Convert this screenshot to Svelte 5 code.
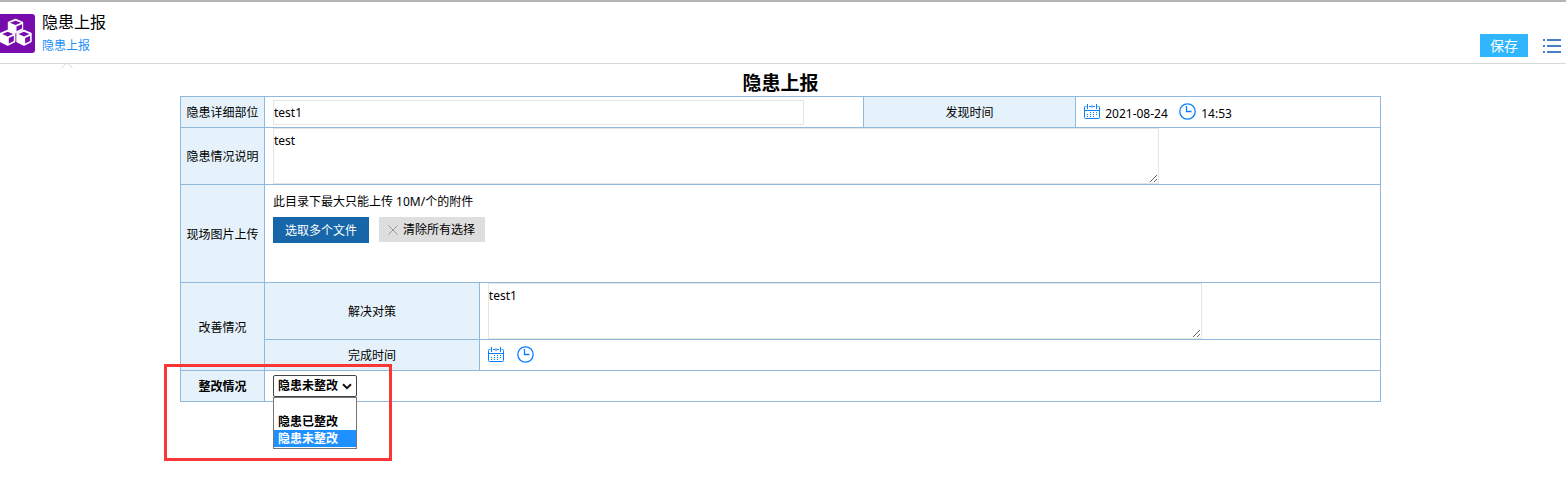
<script lang="ts">
  let place = $state('test1');
  let description = $state('test');
  let measure = $state('test1');
  let status = $state('隐患未整改');

  const statuses = ['', '隐患已整改', '隐患未整改'];
</script>

{#snippet calendar()}
  <svg width="16" height="15" viewBox="0 0 16 15" fill="none" stroke="#0a80ff" aria-hidden="true">
    <path d="M2.5 2.5H1.5Q.5 2.5 .5 3.5V13.5Q.5 14.5 1.5 14.5H14.5Q15.5 14.5 15.5 13.5V3.5Q15.5 2.5 14.5 2.5H13.5M5 2.5H7M9 2.5H11M3.5 0V5M8 1V4M12.5 0V5M1 6.5H15" />
    <path d="M6 8.5H14M3 10.5H14M3 12.5H11" stroke-dasharray="1 2" />
  </svg>
{/snippet}

{#snippet clock()}
  <svg width="17" height="17" viewBox="0 0 17 17" fill="none" stroke="#0a80ff" aria-hidden="true">
    <circle cx="8.5" cy="8.5" r="7.7" stroke-width="1.3" />
    <path d="M7.5 3V8.5H12.5" stroke-width="1.3" />
  </svg>
{/snippet}

<header class="top">
  <svg class="logo" width="35" height="39" viewBox="0 0 35 39" aria-hidden="true">
    <path d="M0 0H32Q35 0 35 3V36Q35 39 32 39H0Z" fill="#780bac" />
    <g fill="#fff" stroke="#fff" stroke-width="1.4" stroke-linejoin="round">
      <path d="M8.5 8.5 15.5 5.5 22.5 8.5V15.5L15.5 18.5 8.5 15.5Z" />
      <path d="M.7 19.5 7.7 16.5 14.7 19.5V27.5L7.7 31 .7 27.5Z" />
      <path d="M17 19.5 24 16.5 31 19.5V27.5L24 31 17 27.5Z" />
    </g>
    <g fill="#780bac">
      <path d="M10 8.8 15.5 6.7 21 8.8 15.5 11.1Z" />
      <path d="M16.5 12.6 22 10.3V14.6L16.5 17.2Z" />
      <path d="M2.2 20 7.7 17.8 13.2 20 7.7 22.5Z" />
      <path d="M8.8 24 13.8 21.7V26.9L8.8 29.4Z" />
      <path d="M18.5 20 24 17.8 29.5 20 24 22.5Z" />
      <path d="M25.1 24 30.1 21.7V26.9L25.1 29.4Z" />
    </g>
  </svg>
  <div class="names">
    <div class="name">隐患上报</div>
    <a class="tab" href="#report">隐患上报
      <svg class="caret" width="12" height="7" viewBox="0 0 12 7" aria-hidden="true">
        <path d="M.5 6 6 .8 11.5 6" fill="#fff" stroke="#d4d4d4" />
      </svg>
    </a>
  </div>
  <div class="actions">
    <button type="button" class="save">保存</button>
    <button type="button" class="menu" aria-label="菜单">
      <svg width="18" height="14" viewBox="0 0 18 14" fill="#4b7fc4" aria-hidden="true">
        <path d="M0 0H2V2H0ZM4 0H18V2H4ZM0 6H2V8H0ZM4 6H18V8H4ZM0 12H2V14H0ZM4 12H18V14H4Z" />
      </svg>
    </button>
  </div>
</header>

<main id="report">
  <h1>隐患上报</h1>
  <table>
    <colgroup>
      <col class="c-label" />
      <col class="c-sub" />
      <col class="c-main" />
      <col class="c-time" />
      <col />
    </colgroup>
    <tbody>
      <tr class="line">
        <th><label for="place">隐患详细部位</label></th>
        <td colspan="2"><input id="place" type="text" bind:value={place} /></td>
        <th>发现时间</th>
        <td>
          <div class="when">
            <button type="button" aria-label="选择日期">{@render calendar()}</button>
            <span class="date">2021-08-24</span>
            <button type="button" aria-label="选择时间">{@render clock()}</button>
            <span>14:53</span>
          </div>
        </td>
      </tr>
      <tr class="area">
        <th><label for="description">隐患情况说明</label></th>
        <td colspan="4"><textarea id="description" bind:value={description}></textarea></td>
      </tr>
      <tr class="files">
        <th>现场图片上传</th>
        <td colspan="4">
          <div class="hint">此目录下最大只能上传 10M/个的附件</div>
          <div class="upload">
            <button type="button" class="pick">选取多个文件</button>
            <button type="button" class="clear">
              <svg width="10" height="10" viewBox="0 0 10 10" stroke="#999" aria-hidden="true">
                <path d="M.5 .5 9.5 9.5M9.5 .5 .5 9.5" />
              </svg>
              清除所有选择
            </button>
          </div>
        </td>
      </tr>
      <tr class="area">
        <th rowspan="2">改善情况</th>
        <th><label for="measure">解决对策</label></th>
        <td colspan="3"><textarea id="measure" bind:value={measure}></textarea></td>
      </tr>
      <tr class="line">
        <th>完成时间</th>
        <td colspan="3">
          <div class="when empty">
            <button type="button" aria-label="选择日期">{@render calendar()}</button>
            <button type="button" aria-label="选择时间">{@render clock()}</button>
          </div>
        </td>
      </tr>
      <tr class="line">
        <th class="strong">
          <label for="status">整改情况</label>
          <div class="mark"></div>
        </th>
        <td colspan="4">
          <div class="status">
            <select id="status" bind:value={status}>
              {#each statuses as item}
                <option value={item}>{item}</option>
              {/each}
            </select>
            <svg class="arrow" width="10" height="7" viewBox="0 0 10 7" aria-hidden="true">
              <path d="M1 1.2 5 5.2 9 1.2" fill="none" stroke="#111" stroke-width="2" />
            </svg>
            <ul role="listbox" aria-label="整改情况">
              {#each statuses as item}
                <li role="option" aria-selected={item === status} class:on={item === status}>{item}</li>
              {/each}
            </ul>
          </div>
        </td>
      </tr>
    </tbody>
  </table>
</main>

<style>
  :global(body) {
    margin: 0;
    background: #fff;
    color: #000;
    font: 12px/16px 'Noto Sans', 'Noto Sans CJK SC', sans-serif;
  }
  button,
  input,
  textarea,
  select {
    box-sizing: border-box;
    margin: 0;
    font: inherit;
    color: inherit;
  }
  button {
    border: 0;
    padding: 0;
    background: transparent;
    cursor: pointer;
  }
  svg {
    display: block;
  }

  .top {
    display: flex;
    box-sizing: border-box;
    height: 64px;
    padding-top: 10px;
    border-top: 2px solid #b4b4b4;
    border-bottom: 1px solid #d8d8d8;
  }
  .logo {
    margin-top: 2px;
  }
  .names {
    margin-left: 7px;
  }
  .name {
    font-size: 16px;
    line-height: 20px;
  }
  .tab {
    position: relative;
    display: block;
    margin-top: 6px;
    color: #1e8ffa;
    text-decoration: none;
  }
  .caret {
    position: absolute;
    left: 19px;
    top: 24px;
  }
  .actions {
    display: flex;
    align-items: center;
    align-self: flex-end;
    gap: 15px;
    margin: 0 5px 6px auto;
  }
  .save {
    width: 48px;
    height: 23px;
    background: #30b5ff;
    color: #fff;
    font-size: 14px;
    line-height: 23px;
  }

  main {
    padding: 6px 185px 97px 180px;
  }
  h1 {
    margin: 0;
    text-align: center;
    font-size: 19px;
    line-height: 26px;
  }
  table {
    width: 100%;
    table-layout: fixed;
    border-collapse: collapse;
  }
  .c-label {
    width: 7%;
  }
  .c-sub {
    width: 17.9%;
  }
  .c-main {
    width: 32%;
  }
  .c-time {
    width: 17.7%;
  }
  th,
  td {
    box-sizing: border-box;
    border: 1px solid #90b9dd;
    padding: 0;
  }
  th {
    padding-top: 2px;
    background: #e6f2fb;
    font-weight: normal;
    white-space: nowrap;
  }
  td {
    padding-left: 8px;
  }
  .line {
    height: 31px;
  }
  .area {
    height: 57px;
  }
  .files {
    height: 98px;
  }
  .files td {
    vertical-align: top;
    padding-top: 9px;
  }
  input,
  textarea {
    display: block;
    border: 1px solid #e6e6e1;
    background: #fff;
    outline: 0;
  }
  input {
    width: 90%;
    height: 25px;
    padding: 0;
  }
  textarea {
    width: 80%;
    height: 56px;
    padding: 4px 0;
    resize: both;
  }

  .when {
    display: flex;
    align-items: center;
    gap: 5px;
    padding-bottom: 2px;
  }
  .when span {
    padding-top: 6px;
  }
  .date {
    min-width: 69px;
  }
  .when.empty {
    gap: 13px;
  }

  .upload {
    display: flex;
    align-items: flex-start;
    gap: 10px;
    margin-top: 7px;
  }
  .pick {
    width: 96px;
    height: 26px;
    padding-top: 1px;
    background: #1766a9;
    color: #fff;
  }
  .clear {
    display: flex;
    align-items: center;
    gap: 5px;
    height: 25px;
    padding: 0 10px 0 9px;
    background: #dedede;
  }

  .strong {
    position: relative;
    font-weight: bold;
  }
  .mark {
    position: absolute;
    z-index: 2;
    left: -17px;
    top: -7px;
    box-sizing: border-box;
    width: 228px;
    height: 97px;
    border: 3px solid #fa3636;
    pointer-events: none;
  }
  .status {
    position: relative;
    width: 84px;
    font-weight: bold;
  }
  select {
    display: block;
    width: 100%;
    height: 22px;
    appearance: none;
    padding: 0 0 0 4px;
    border: 1px solid #444;
    border-radius: 2px;
    background: #fff;
    outline: 0;
  }
  .arrow {
    position: absolute;
    right: 5px;
    top: 8px;
    pointer-events: none;
  }
  ul {
    position: absolute;
    z-index: 1;
    top: 22px;
    left: 0;
    right: 0;
    margin: 0;
    padding: 0 0 1px;
    border: 1px solid #767676;
    background: #fff;
    list-style: none;
  }
  li {
    height: 17px;
    padding-left: 4px;
    line-height: 17px;
  }
  li:first-child {
    height: 15px;
  }
  li.on {
    background: #1e90ff;
    color: #fff;
  }
</style>
